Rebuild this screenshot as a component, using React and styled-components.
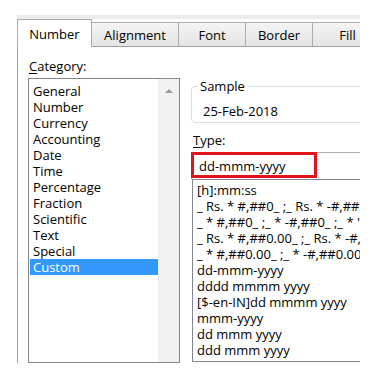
import styled, { createGlobalStyle } from "styled-components";

const GlobalStyle = createGlobalStyle`
  body {
    margin: 0;
    background: #fff;
    font-family: "Open Sans", "Noto Sans", sans-serif;
    color: #000;
  }
`;

const Frame = styled.div`
  width: 343px;
  margin: 15px 0 0 17px;
  overflow: hidden;
`;

const TabStrip = styled.div`
  display: flex;
  align-items: flex-end;
  height: 28px;
  border-top: 4px solid #ececec;
`;

const Tab = styled.div`
  flex: none;
  box-sizing: border-box;
  width: ${(p) => p.$w}px;
  height: ${(p) => (p.$active ? 28 : 25)}px;
  display: flex;
  align-items: center;
  justify-content: center;
  font-size: 13px;
  color: #000;
  border: 1px solid #acacac;
  border-left-width: ${(p) => (p.$first ? 1 : 0)}px;
  border-bottom: ${(p) => (p.$active ? "none" : "1px solid #a0a0a0")};
  background: ${(p) =>
    p.$active ? "#fff" : "linear-gradient(#f4f4f4, #e4e4e4)"};
`;

const Body = styled.div`
  box-sizing: border-box;
  height: 316px;
  display: flex;
  padding: 10px 0 0 10px;
  border-left: 1px solid #a0a0a0;
`;

const LeftCol = styled.div`
  flex: none;
  width: 152px;
  display: flex;
  flex-direction: column;
`;

const Label = styled.div`
  font-size: 13px;
  line-height: 18px;
  height: 18px;
  margin-bottom: ${(p) => p.$gap || 0}px;
  margin-top: ${(p) => p.$top || 0}px;
  padding-left: ${(p) => p.$indent || 0}px;
  color: #000;

  u {
    text-decoration-thickness: 1px;
    text-underline-offset: 2px;
  }
`;

const CategoryBox = styled.div`
  flex: 1;
  display: flex;
  border: 1px solid #828790;
`;

const Items = styled.div`
  flex: 1;
  padding: 4px 0 0 1px;
`;

const Item = styled.div`
  height: 16px;
  line-height: 16px;
  font-size: 13px;
  padding-left: 3px;
  white-space: nowrap;
  background: ${(p) => (p.$selected ? "#3399ff" : "transparent")};
  color: ${(p) => (p.$selected ? "#fff" : "#000")};
`;

const ScrollTrack = styled.div`
  flex: none;
  width: 21px;
  background: #f2f2f2;
  border-left: 1px solid #ececec;
  display: flex;
  justify-content: center;
  padding-top: 10px;
  box-sizing: border-box;
`;

const UpArrow = styled.div`
  width: 0;
  height: 0;
  border-left: 4px solid transparent;
  border-right: 4px solid transparent;
  border-bottom: 4px solid #9a9a9a;
`;

const RightCol = styled.div`
  flex: none;
  width: 240px;
  margin-left: 11px;
  display: flex;
  flex-direction: column;
`;

const SampleBox = styled.fieldset`
  margin: 22px 0 0 0;
  padding: 10px 0 3px 11px;
  border: 1px solid #d9dde2;
  border-radius: 4px;
  width: 240px;
  box-sizing: border-box;

  legend {
    font-size: 13px;
    line-height: 14px;
    padding: 0 2px;
    margin-left: -5px;
    color: #000;
  }
`;

const SampleValue = styled.div`
  font-size: 13px;
  line-height: 16px;
  color: #000;
`;

const TypeInput = styled.div`
  position: relative;
  box-sizing: border-box;
  height: 27px;
  border: 1px solid #abadb3;
  border-bottom: none;
  display: flex;
  align-items: center;
  padding-left: 7px;
  font-size: 13px;
  color: #000;
`;

const Highlight = styled.div`
  position: absolute;
  left: -1px;
  top: -1px;
  width: 126px;
  height: 26px;
  box-sizing: border-box;
  border: 3px solid #e3131b;
`;

const TypeList = styled.div`
  flex: 1;
  margin-left: 1px;
  border: 1px solid #828790;
  padding: 2px 0 0 4px;
  overflow: hidden;
  margin-bottom: 1px;
`;

const TypeItem = styled.div`
  height: 16px;
  line-height: 16px;
  font-size: 13px;
  white-space: nowrap;
  color: #000;
`;

const tabs = [
  { name: "Number", w: 75 },
  { name: "Alignment", w: 87 },
  { name: "Font", w: 67 },
  { name: "Border", w: 67 },
  { name: "Fill", w: 70 },
];

const categories = [
  "General",
  "Number",
  "Currency",
  "Accounting",
  "Date",
  "Time",
  "Percentage",
  "Fraction",
  "Scientific",
  "Text",
  "Special",
  "Custom",
];

const formats = [
  "[h]:mm:ss",
  "_ Rs. * #,##0_ ;_ Rs. * -#,##0_ ;_ Rs. * \"-\"_ ;_ @_",
  "_ * #,##0_ ;_ * -#,##0_ ;_ * \"-\"_ ;_ @_",
  "_ Rs. * #,##0.00_ ;_ Rs. * -#,##0.00_ ;_ Rs. * \"-\"??_ ;_ @_",
  "_ * #,##0.00_ ;_ * -#,##0.00_ ;_ * \"-\"??_ ;_ @_",
  "dd-mmm-yyyy",
  "dddd mmmm yyyy",
  "[$-en-IN]dd mmmm yyyy",
  "mmm-yyyy",
  "dd mmm yyyy",
  "ddd mmm yyyy",
];

export default function App() {
  return (
    <>
      <GlobalStyle />
      <Frame>
        <TabStrip>
          {tabs.map((t, i) => (
            <Tab key={t.name} $w={t.w} $active={i === 0} $first={i === 0}>
              {t.name}
            </Tab>
          ))}
        </TabStrip>

        <Body>
          <LeftCol>
            <Label $gap={3} $indent={1}>
              <u>C</u>ategory:
            </Label>
            <CategoryBox>
              <Items>
                {categories.map((c) => (
                  <Item key={c} $selected={c === "Custom"}>
                    {c}
                  </Item>
                ))}
              </Items>
              <ScrollTrack>
                <UpArrow />
              </ScrollTrack>
            </CategoryBox>
          </LeftCol>

          <RightCol>
            <SampleBox>
              <legend>Sample</legend>
              <SampleValue>25-Feb-2018</SampleValue>
            </SampleBox>

            <Label $top={8} $gap={3} $indent={2}>
              <u>T</u>ype:
            </Label>
            <TypeInput>
              dd-mmm-yyyy
              <Highlight />
            </TypeInput>
            <TypeList>
              {formats.map((f) => (
                <TypeItem key={f}>{f}</TypeItem>
              ))}
            </TypeList>
          </RightCol>
        </Body>
      </Frame>
    </>
  );
}
